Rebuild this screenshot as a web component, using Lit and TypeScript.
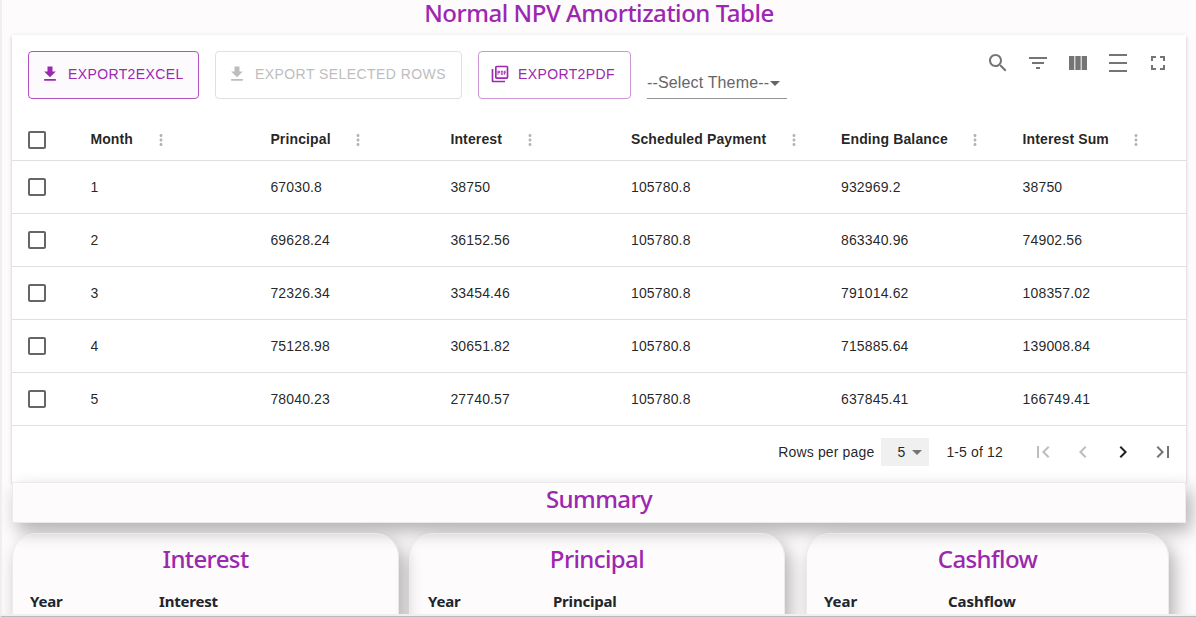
import { LitElement, html, css, svg } from "lit";
import { customElement, property } from "lit/decorators.js";

const paths: Record<string, string> = {
  download: "M19 9h-4V3H9v6H5l7 7 7-7zM5 18v2h14v-2H5z",
  pdf: "M20 2H8c-1.100 0-2 .9-2 2v12c0 1.100.9 2 2 2h12c1.100 0 2-.9 2-2V4c0-1.100-.9-2-2-2zm0 14H8V4h12v12zM4 6H2v14c0 1.100.9 2 2 2h14v-2H4V6zm12 6V9c0-.55-.45-1-1-1h-2v5h2c.55 0 1-.45 1-1zm-2-3h1v3h-1V9zm4 2h1v-1h-1V9h1V8h-2v5h1zm-8 0h1c.55 0 1-.45 1-1V9c0-.55-.45-1-1-1H9v5h1v-2zm0-2h1v1h-1V9z",
  search: "M15.500 14h-.79l-.28-.27C15.410 12.590 16 11.110 16 9.500 16 5.910 13.090 3 9.500 3S3 5.910 3 9.500 5.910 16 9.500 16c1.610 0 3.090-.59 4.230-1.570l.27.28v.79l5 4.990L20.490 19l-4.990-5zm-6 0C7.010 14 5 11.990 5 9.500S7.010 5 9.500 5 14 7.010 14 9.500 11.990 14 9.500 14z",
  filter: "M10 18h4v-2h-4v2zM3 6v2h18V6H3zm3 7h12v-2H6v2z",
  columns: "M14.670 5v14H9.330V5h5.340zm1 14H21V5h-5.330v14zm-7.340 0V5H3v14h5.330z",
  density: "M21 11H3v2h18v-2zm0 8H3v2h18v-2zm0-16H3v2h18V3z",
  full: "M7 14H5v5h5v-2H7v-3zm-2-4h2V7h3V5H5v5zm12 7h-3v2h5v-5h-2v3zM14 5v2h3v3h2V5h-5z",
  more: "M12 8c1.100 0 2-.9 2-2s-.9-2-2-2-2 .9-2 2 .9 2 2 2zm0 2c-1.100 0-2 .9-2 2s.9 2 2 2 2-.9 2-2-.9-2-2-2zm0 6c-1.100 0-2 .9-2 2s.9 2 2 2 2-.9 2-2-.9-2-2-2z",
  box: "M19 5v14H5V5h14m0-2H5c-1.100 0-2 .9-2 2v14c0 1.100.9 2 2 2h14c1.100 0 2-.9 2-2V5c0-1.100-.9-2-2-2z",
  drop: "M7 10l5 5 5-5z",
  first: "M18.410 16.590L13.820 12l4.590-4.590L17 6l-6 6 6 6zM6 6h2v12H6z",
  prev: "M15.410 7.410L14 6l-6 6 6 6 1.410-1.410L10.830 12z",
  next: "M10 6L8.590 7.410 13.170 12l-4.580 4.590L10 18l6-6z",
  last: "M5.590 7.410L10.180 12l-4.590 4.590L7 18l6-6-6-6zM16 6h2v12h-2z",
};

@customElement("md-icon")
export class MdIcon extends LitElement {
  @property() name = "";
  static styles = css`
    :host { display: block; width: 24px; height: 24px; flex: none; }
    svg { display: block; width: 100%; height: 100%; fill: currentColor; }
  `;
  render() {
    return html`<svg viewBox="0 0 24 24">${svg`<path d=${paths[this.name]}></path>`}</svg>`;
  }
}

const columns = ["Month", "Principal", "Interest", "Scheduled Payment", "Ending Balance", "Interest Sum"];
const rows = [
  ["1", "67030.8", "38750", "105780.8", "932969.2", "38750"],
  ["2", "69628.24", "36152.56", "105780.8", "863340.96", "74902.56"],
  ["3", "72326.34", "33454.46", "105780.8", "791014.62", "108357.02"],
  ["4", "75128.98", "30651.82", "105780.8", "715885.64", "139008.84"],
  ["5", "78040.23", "27740.57", "105780.8", "637845.41", "166749.41"],
];

@customElement("app-root")
export class AppRoot extends LitElement {
  static styles = css`
    :host {
      display: block; box-sizing: border-box; width: 100%; height: 617px; overflow: hidden;
      background: #fdfbfc; border-left: 2px solid #f0eef0; border-bottom: 1px solid #bababa;
      font-family: "Liberation Sans", Arial, sans-serif; color: rgba(0, 0, 0, 0.87);
    }
    * { box-sizing: border-box; }
    .view { height: 616px; display: flex; flex-direction: column; border-bottom: 2px solid #f0f0f0; padding: 0 10px; overflow: hidden; }
    h2 { margin: 0; font: 500 24px/28px "Noto Sans", sans-serif; letter-spacing: -0.6px; color: #9c27b0; text-align: center; white-space: nowrap; }
    .title { height: 35px; flex: none; line-height: 26px; letter-spacing: -0.46px; }
    .paper { flex: none; height: 447px; background: #fff; box-shadow: 0 3px 1px -2px rgba(0,0,0,.2), 0 2px 2px 0 rgba(0,0,0,.14), 0 1px 5px 0 rgba(0,0,0,.12); }
    .toolbar { height: 84px; display: flex; justify-content: space-between; padding: 16px 16px 0; }
    .actions { display: flex; gap: 16px; height: 48px; }
    .btn { display: flex; align-items: center; gap: 8px; height: 48px; padding: 0 15px 2px 11px; border: 1px solid #cf93d7; border-radius: 4px; color: #9c27b0; font-size: 14px; letter-spacing: 0.38px; white-space: nowrap; }
    .btn md-icon { width: 20px; height: 20px; }
    .b1 { width: 171px; border-color: #b052c0; background: #fcfafd; }
    .b2 { width: 247px; border-color: #e0e0e0; color: #bdbdbd; letter-spacing: .43px; }
    .b3 { width: 153px; }
    .select { width: 140px; height: 48px; border-bottom: 1px solid #949494; display: flex; align-items: center; padding-top: 16px; font-size: 16px; letter-spacing: .15px; color: #666; white-space: nowrap; }
    .select md-icon { margin-left: -6px; }
    .tools { display: flex; gap: 16px; color: #757575; }
    .row { display: grid; grid-template-columns: 62.400px 180px 180px 180.600px 210px 181.600px 1fr; height: 53px; align-items: center; border-bottom: 1px solid #e0e0e0; font-size: 14px; letter-spacing: .15px; padding-left: 16px; }
    .row.head { height: 42px; font-weight: 700; padding-bottom: 1px; letter-spacing: .13px; }
    .row > md-icon { margin-left: -3px; color: #666; }
    .row.head > md-icon { margin-top: 2px; }
    .head .col { display: flex; align-items: center; gap: 18.500px; white-space: nowrap; }
    .head .col md-icon { width: 18px; height: 18px; margin-top: 2px; color: #b4b4b4; }
    .pager { display: flex; align-items: center; height: 56px; justify-content: flex-end; padding: 0 11px 4px 0; font-size: 14px; letter-spacing: .15px; white-space: nowrap; }
    .size { display: flex; align-items: center; justify-content: flex-end; width: 48px; height: 28px; background: #f0f0f0; margin: 0 17px 0 7px; }
    .size md-icon { color: #757575; }
    .nav { display: flex; gap: 16px; margin-left: 28px; color: #bdbdbd; }
    .nav .on { color: #212121; }
    .nav .end { color: #757575; }
    .summary { flex: none; height: 41px; margin: 0 0 10px; border: 1px solid #ebebeb; background: #fdfbfc; box-shadow: 5px 8px 18px rgba(0,0,0,.3); padding-top: 2px; }
    .cards { display: flex; height: 120px; }
    .card { flex: none; width: 387px; height: 120px; border: 1px solid #ebebeb; border-radius: 24px; box-shadow: 5px 8px 18px rgba(0,0,0,.3); padding-top: 11px; }
    .pair { display: grid; grid-template-columns: 129px 1fr; padding: 17px 0 0 17px; font: 700 15px/22px "Noto Sans", sans-serif; letter-spacing: -.2px; color: #212529; }
    .c2 { width: 376px; margin-left: 10px; }
    .c2 .pair { grid-template-columns: 125px 1fr; padding-left: 18px; }
    .c3 { width: 363px; margin-left: 21px; }
    .c3 .pair { grid-template-columns: 124px 1fr; padding-left: 17px; letter-spacing: -.05px; }
  `;

  render() {
    return html`
      <div class="view">
        <h2 class="title">Normal NPV Amortization Table</h2>
        <div class="paper">
          <div class="toolbar">
            <div class="actions">
              <div class="btn b1"><md-icon name="download"></md-icon><span>EXPORT2EXCEL</span></div>
              <div class="btn b2"><md-icon name="download"></md-icon><span>EXPORT SELECTED ROWS</span></div>
              <div class="btn b3"><md-icon name="pdf"></md-icon><span>EXPORT2PDF</span></div>
              <div class="select"><span>--Select Theme--</span><md-icon name="drop"></md-icon></div>
            </div>
            <div class="tools">
              ${["search", "filter", "columns", "density", "full"].map((n) => html`<md-icon name=${n}></md-icon>`)}
            </div>
          </div>
          <div class="row head">
            <md-icon name="box"></md-icon>
            ${columns.map((c) => html`<div class="col"><span>${c}</span><md-icon name="more"></md-icon></div>`)}
          </div>
          ${rows.map((r) => html`<div class="row"><md-icon name="box"></md-icon>${r.map((v) => html`<span>${v}</span>`)}</div>`)}
          <div class="pager">
            <span>Rows per page</span>
            <div class="size"><span>5</span><md-icon name="drop"></md-icon></div>
            <span>1-5 of 12</span>
            <div class="nav">
              <md-icon name="first"></md-icon><md-icon name="prev"></md-icon>
              <md-icon class="on" name="next"></md-icon><md-icon class="end" name="last"></md-icon>
            </div>
          </div>
        </div>
        <div class="summary"><h2>Summary</h2></div>
        <div class="cards">
          ${["Interest", "Principal", "Cashflow"].map((t, i) => html`
            <div class="card c${i + 1}"><h2>${t}</h2><div class="pair"><span>Year</span><span>${t}</span></div></div>`)}
        </div>
      </div>
    `;
  }
}
